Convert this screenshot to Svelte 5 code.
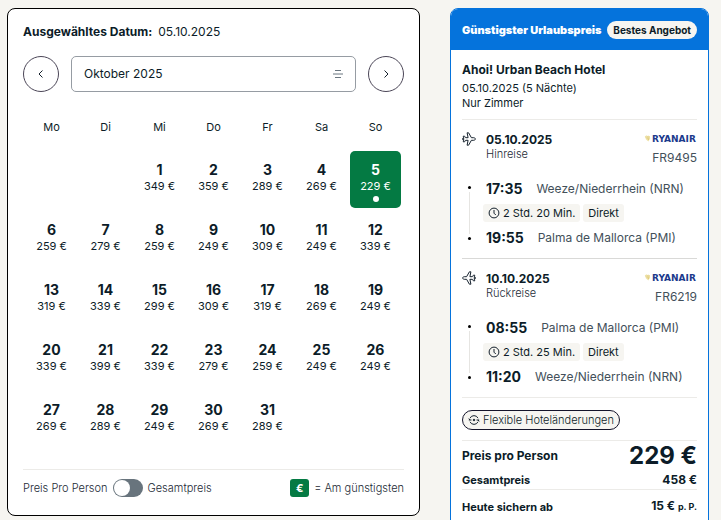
<script>
  const weekdays = ['Mo', 'Di', 'Mi', 'Do', 'Fr', 'Sa', 'So'];
  const prices = [
    349, 359, 289, 269, 229, 259, 279, 259, 249, 309, 249, 339, 319, 339, 299, 309,
    319, 269, 249, 339, 399, 339, 279, 259, 249, 249, 269, 289, 249, 269, 289
  ];
  const cells = [null, null, ...prices.map((price, i) => ({ day: i + 1, price })), null, null];
  const weeks = [0, 1, 2, 3, 4].map((w) => cells.slice(w * 7, w * 7 + 7));

  const flights = [
    {
      date: '05.10.2025', label: 'Hinreise', number: 'FR9495', back: false,
      dep: '17:35', from: 'Weeze/Niederrhein (NRN)',
      arr: '19:55', to: 'Palma de Mallorca (PMI)', duration: '2 Std. 20 Min.'
    },
    {
      date: '10.10.2025', label: 'Rückreise', number: 'FR6219', back: true,
      dep: '08:55', from: 'Palma de Mallorca (PMI)',
      arr: '11:20', to: 'Weeze/Niederrhein (NRN)', duration: '2 Std. 25 Min.'
    }
  ];

  let selected = $state(5);
  let total = $state(false);
</script>

<main>
  <section class="calendar">
    <p class="chosen"><strong>Ausgewähltes Datum:</strong><span>05.10.2025</span></p>

    <div class="nav">
      <button class="round" aria-label="Vorheriger Monat">
        <svg width="12" height="12" viewBox="0 0 12 12"><path d="M7.5 2.5 4 6l3.5 3.500" /></svg>
      </button>
      <div class="month">
        <select aria-label="Monat">
          <option>Oktober 2025</option>
        </select>
        <svg width="12" height="10" viewBox="0 0 12 10" aria-hidden="true">
          <path d="M3 1.500h6M1 5h10M3 8.500h6" />
        </svg>
      </div>
      <button class="round" aria-label="Nächster Monat">
        <svg width="12" height="12" viewBox="0 0 12 12"><path d="M4.500 2.500 8 6 4.500 9.500" /></svg>
      </button>
    </div>

    <table>
      <thead>
        <tr>{#each weekdays as name}<th scope="col">{name}</th>{/each}</tr>
      </thead>
      <tbody>
        {#each weeks as week}
          <tr>
            {#each week as cell}
              <td>
                {#if cell}
                  <button class="day" class:selected={cell.day === selected} onclick={() => (selected = cell.day)}>
                    <b>{cell.day}</b>
                    <span>{cell.price} €</span>
                    <i></i>
                  </button>
                {/if}
              </td>
            {/each}
          </tr>
        {/each}
      </tbody>
    </table>

    <div class="legend">
      <label class="toggle">
        <span>Preis Pro Person</span>
        <input type="checkbox" role="switch" bind:checked={total} />
        <span>Gesamtpreis</span>
      </label>
      <span class="cheapest"><b>€</b>= Am günstigsten</span>
    </div>
  </section>

  <aside class="offer">
    <header>
      <h2>Günstigster Urlaubspreis</h2>
      <span class="badge">Bestes Angebot</span>
    </header>
    <div class="body">
      <div class="hotel">
        <h3>Ahoi! Urban Beach Hotel</h3>
        <p>05.10.2025 (5 Nächte)</p>
        <p>Nur Zimmer</p>
      </div>

      {#each flights as f}
        <article class="flight">
          <div class="head">
            <svg class="plane" class:back={f.back} width="14" height="14" viewBox="0 0 14 14" aria-hidden="true">
              <path d="M13.300 7c0-.8-.7-1.300-1.600-1.300H9.400L6.600.8H5.100l1 4.900H3.700L2.600 4.200H1.200L2 6.300H.7v1.400H2l-.8 2.100h1.400l1.100-1.500h2.400l-1 4.900h1.500l2.800-4.900h2.300c.9 0 1.600-.5 1.600-1.300Z" />
            </svg>
            <div class="when">
              <b>{f.date}</b>
              <span>{f.label}</span>
            </div>
            <div class="carrier">
              <svg width="53" height="9" viewBox="0 0 53 9" role="img" aria-label="Ryanair">
                <path d="M.8 2.500 2.500 1.300l1 .7.8-.5 1.700.9L6.200 4.500 4.300 7.500 2 5.500Z" fill="#f0e4ae" />
                <path d="m1.500 3 3 2.800M3 2l1.700 3.800M5 2 4.500 6" stroke="#d9c36c" stroke-width=".5" />
                <text x="8" y="8">RYANAIR</text>
              </svg>
              <span>{f.number}</span>
            </div>
          </div>
          <div class="route">
            <div class="line" aria-hidden="true"><i></i><s></s><i></i></div>
            <div class="stops">
              <p><b>{f.dep}</b><span>{f.from}</span></p>
              <div class="tags">
                <span>
                  <svg width="12" height="12" viewBox="0 0 12 12" aria-hidden="true">
                    <circle cx="6" cy="6" r="4.900" /><path d="M6 3v3.200l1.800 1.800" />
                  </svg>{f.duration}
                </span>
                <span>Direkt</span>
              </div>
              <p><b>{f.arr}</b><span>{f.to}</span></p>
            </div>
          </div>
        </article>
      {/each}

      <div class="flex">
        <span>
          <svg width="12" height="12" viewBox="0 0 12 12" aria-hidden="true">
            <path d="M2 4.200a4.400 4.400 0 0 1 8 0M10 7.800a4.400 4.400 0 0 1-8 0M.8 6h2.700M8.500 6h2.700M.8 4.600 2 6M11.200 7.400 10 6" />
            <circle cx="6" cy="6" r=".8" fill="#14202c" />
          </svg>Flexible Hoteländerungen
        </span>
      </div>

      <dl>
        <div class="per"><dt>Preis pro Person</dt><dd>229 €</dd></div>
        <div class="sum"><dt>Gesamtpreis</dt><dd>458 €</dd></div>
        <div class="deposit"><dt>Heute sichern ab</dt><dd>15 € <small>p. P.</small></dd></div>
      </dl>
    </div>
  </aside>
</main>

<style>
  :global(body) {
    background: #f6f5f1;
  }
  main, main * {
    box-sizing: border-box;
  }
  main {
    display: grid;
    grid-template-columns: minmax(0, 413fr) minmax(0, 259fr);
    gap: 30px;
    align-items: start;
    height: 100vh;
    overflow: hidden;
    padding: 8px 12px 0 7px;
    color: #0c1c28;
    font: 400 11px/16px Inter, "Liberation Sans", sans-serif;
  }
  p, h2, h3, dl, dd {
    margin: 0;
  }
  button, select {
    font: inherit;
    color: inherit;
  }
  svg {
    flex: none;
    fill: none;
    stroke: #14202c;
  }

  .calendar {
    padding: 15px 15px 18px;
    background: #fff;
    border: 1px solid #000;
    border-radius: 8px;
  }
  .chosen {
    display: flex;
    gap: 6px;
    font-size: 12px;
  }
  .nav {
    display: flex;
    gap: 12px;
    margin-top: 16px;
  }
  .round {
    display: flex;
    flex: none;
    align-items: center;
    justify-content: center;
    width: 36px;
    height: 36px;
    padding: 0;
    background: #fff;
    border: 1px solid #4b4657;
    border-radius: 50%;
  }
  .month {
    position: relative;
    flex: 1;
  }
  .month select {
    width: 100%;
    height: 36px;
    padding: 0 12px;
    font-size: 12px;
    background: #fff;
    border: 1px solid #969ca3;
    border-radius: 5px;
    appearance: none;
  }
  .month svg {
    position: absolute;
    top: 13px;
    right: 12px;
    stroke: #6b7780;
    pointer-events: none;
  }

  table {
    width: 100%;
    margin-top: 24px;
    table-layout: fixed;
    border-spacing: 3px;
  }
  th, td {
    padding: 0;
    font-weight: 400;
  }
  th {
    height: 16px;
    padding-bottom: 13px;
  }
  td {
    height: 57px;
  }
  .day {
    display: flex;
    flex-direction: column;
    align-items: center;
    width: 100%;
    height: 57px;
    padding: 10px 0 0;
    background: none;
    border: 0;
    border-radius: 5px;
  }
  .day b {
    font-size: 14px;
    line-height: 17px;
  }
  .day i {
    width: 6px;
    height: 6px;
    margin-top: 2px;
    border-radius: 50%;
  }
  .selected {
    color: #fff;
    background: #047a43;
  }
  .selected i {
    background: #fff;
  }

  .legend {
    display: flex;
    justify-content: space-between;
    margin-top: 18px;
    padding-top: 9px;
    color: #1c2a35;
    font-weight: 300;
    border-top: 1px solid #ecebe8;
  }
  .toggle, .cheapest {
    display: flex;
    gap: 5px;
    align-items: center;
  }
  .toggle input {
    display: flex;
    width: 30px;
    height: 18px;
    margin: 0;
    padding: 1px;
    background: #68747d;
    border-radius: 9px;
    appearance: none;
  }
  .toggle input::before {
    width: 16px;
    height: 16px;
    background: #fff;
    border-radius: 50%;
    content: "";
  }
  .toggle input:checked {
    justify-content: flex-end;
  }
  .cheapest b {
    width: 19px;
    color: #fff;
    font-weight: 700;
    line-height: 18px;
    text-align: center;
    background: #047a43;
    border-radius: 3px;
  }

  .offer {
    background: #fff;
    border: 1px solid #0573dc;
    border-radius: 8px;
    overflow: hidden;
  }
  header {
    display: flex;
    align-items: center;
    justify-content: space-between;
    height: 41px;
    padding: 0 11px;
    background: #0573dc;
    white-space: nowrap;
  }
  h2 {
    color: #fff;
    font: 900 11px/16px Inter, "Liberation Sans", sans-serif;
  }
  .badge {
    padding: 0 6px;
    font-size: 10px;
    font-weight: 700;
    line-height: 18px;
    background: #f6f5f1;
    border-radius: 9px;
  }
  .body {
    padding: 11px 11px 40px;
  }
  .hotel {
    padding-bottom: 8px;
    line-height: 15px;
    border-bottom: 1px solid #ecebe8;
  }
  h3 {
    margin-bottom: 2px;
    font-size: 12px;
    line-height: 18px;
  }
  .flight {
    padding: 12px 0;
    border-bottom: 1px solid #d9d9d7;
  }
  .flight:last-of-type {
    border-color: #ecebe8;
  }
  .head {
    display: flex;
    gap: 10px;
  }
  .plane.back {
    transform: scaleX(-1);
  }
  .when, .carrier {
    display: flex;
    flex-direction: column;
  }
  .when {
    flex: 1;
    color: #1c2a35;
    font-weight: 300;
    line-height: 14px;
  }
  .when b {
    color: #0c1c28;
    font-size: 12px;
    font-weight: 700;
    line-height: 15px;
  }
  .carrier {
    align-items: flex-end;
    padding-top: 2px;
    color: #43505a;
    font-size: 12px;
  }
  .carrier span {
    margin-top: 7px;
  }
  .carrier svg {
    stroke: none;
  }
  .carrier text {
    fill: #1b3a8c;
    font: 700 9px "DejaVu Sans", sans-serif;
  }
  .route {
    display: flex;
    margin-top: 15px;
  }
  .line {
    display: flex;
    flex-direction: column;
    align-items: center;
    gap: 3px;
    width: 15px;
    margin-right: 6px;
    padding: 5px 0 6px;
  }
  .line i {
    width: 3px;
    height: 3px;
    background: #000;
    border-radius: 50%;
  }
  .line s {
    flex: 1;
    width: 1px;
    background: #e6e5e2;
  }
  .stops p {
    display: flex;
    gap: 14px;
    align-items: center;
    padding-left: 3px;
    color: #43505a;
    font-size: 12px;
  }
  .stops b {
    color: #0c1c28;
    font-size: 14px;
  }
  .tags {
    display: flex;
    gap: 3px;
    margin: 7px 0 8px;
  }
  .tags span {
    display: flex;
    gap: 3px;
    align-items: center;
    padding: 0 5px;
    line-height: 18px;
    background: #f6f5f1;
    border-radius: 3px;
  }
  .flex {
    display: flex;
    padding: 12px 0 10px;
    border-bottom: 1px solid #ecebe8;
  }
  .flex span {
    display: flex;
    gap: 3px;
    align-items: center;
    padding: 0 5px;
    font-weight: 300;
    line-height: 18px;
    background: #f6f5f1;
    border: 1px solid #14142b;
    border-radius: 10px;
  }
  dl div {
    display: flex;
    align-items: center;
    justify-content: space-between;
    font-weight: 700;
  }
  dd {
    font-size: 12px;
  }
  .per {
    height: 30px;
    font-size: 12px;
  }
  .per dd {
    font-size: 24px;
  }
  .sum {
    padding: 1px 0;
    border-bottom: 1px solid #ecebe8;
  }
  .deposit {
    padding-top: 8px;
  }
  small {
    font-size: 9px;
  }
</style>
